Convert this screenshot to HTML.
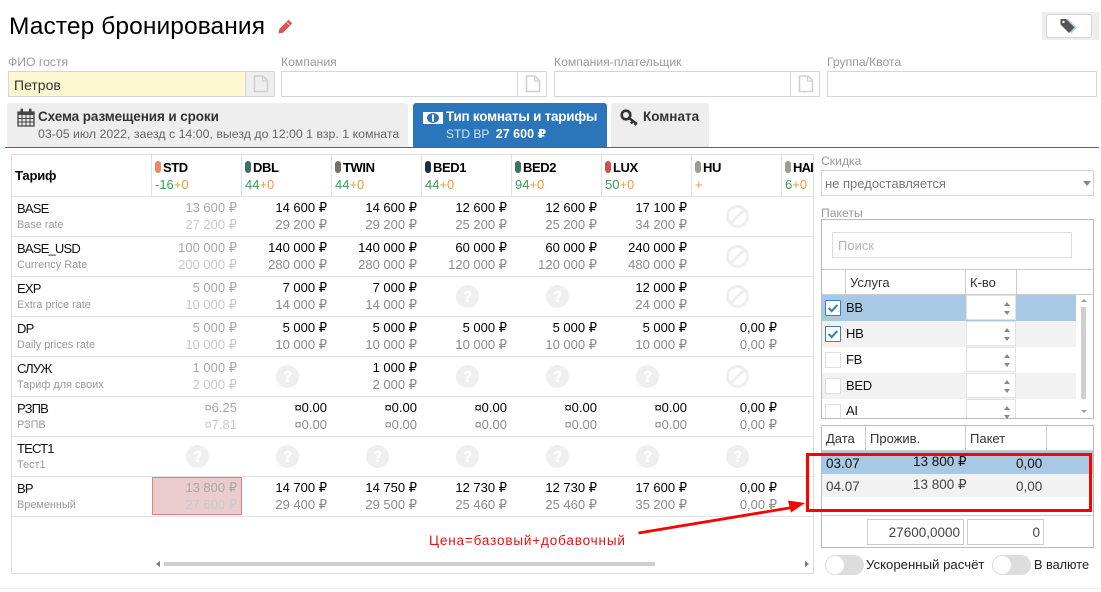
<!DOCTYPE html>
<html lang="ru"><head><meta charset="utf-8"><title>Мастер бронирования</title>
<style>
*{box-sizing:border-box}
html,body{margin:0;padding:0;background:#fff}
body{position:relative;width:1101px;height:592px;overflow:hidden;font-family:"Liberation Sans","DejaVu Sans",sans-serif;font-size:13px;color:#222}
.a{position:absolute}
.t{position:absolute;white-space:nowrap}
.lbl{color:#999;font-size:12.2px;line-height:14px}
.in{position:absolute;top:71px;height:26px;border:1px solid #d5d5d5;background:#fff}
.ad{position:absolute;top:71px;height:26px;width:30px;border:1px solid #d5d5d5;background:#fff}
.ad svg{position:absolute;left:7px;top:3px}
.vl{position:absolute;width:1px;background:#e2e2e2}
.hl{position:absolute;height:1px;background:#e2e2e2}
.pill{position:absolute;top:161px;width:6px;height:12px;border-radius:3px}
.hn{position:absolute;top:160px;font-weight:bold;font-size:13px;letter-spacing:-.4px;line-height:15px;color:#000;white-space:nowrap}
.hs{position:absolute;top:177px;font-size:13px;line-height:15px;color:#f09a3e;white-space:nowrap}
.hs u{text-decoration:none;color:#3e9a5c}
.n{position:absolute;left:17px;font-size:13px;letter-spacing:-.8px;line-height:16px;color:#111;white-space:nowrap}
.s{position:absolute;left:17px;font-size:10.9px;line-height:13px;color:#999;white-space:nowrap}
.c{position:absolute;width:86px;text-align:right;font-size:13px;line-height:17px;white-space:nowrap}
.c b,.c i{display:block;font-weight:normal;font-style:normal}
.c b{color:#000}.c i{color:#8c8c8c}
.c.d b{color:#a8a8a8}.c.d i{color:#cacaca}
.x1{left:151px}.x2{left:241px}.x3{left:331px}.x4{left:421px}.x5{left:511px}.x6{left:601px}.x7{left:691px}
.ic{position:absolute;width:23px;height:23px}
.chk{position:absolute;left:825px;width:16px;height:16px;border:1px solid #ddd;background:#fff;border-radius:1px}
.chk.on{border-color:#3a7fbf}
.sp{position:absolute;left:966px;width:50px;height:25px;background:#fff;border:1px solid #e2e2e2}
.sp:before,.sp:after{content:"";position:absolute;left:37px;border-left:3.5px solid transparent;border-right:3.5px solid transparent}
.sp:before{top:6px;border-bottom:4px solid #888}
.sp:after{top:15px;border-top:4px solid #888}
.p{position:absolute;font-size:13px;line-height:16px;color:#111;white-space:nowrap}
.m{font-size:13px;letter-spacing:-.3px}
.tg{position:absolute;top:555px;width:39px;height:20px;border-radius:10px;background:#ddd}
.tg:before{content:"";position:absolute;left:1px;top:1px;width:18px;height:18px;border-radius:9px;background:#fff}
</style></head><body>

<svg width="0" height="0" style="position:absolute"><defs>
<symbol id="q" viewBox="0 0 23 23"><circle cx="11.5" cy="11.5" r="11.5" fill="#efefef"/><path d="M7.8 8.8C8.2 6.6 9.800 5.500 11.700 5.500C13.900 5.500 15.500 6.900 15.500 8.800C15.500 11.300 12.800 11.500 12.800 13.500H10.200C10.200 10.500 12.700 10.300 12.700 8.900C12.700 8.200 12.200 7.800 11.600 7.800C10.900 7.800 10.400 8.300 10.300 9.200Z" fill="#fff"/><rect x="10.200" y="14.600" width="2.700" height="2.700" fill="#fff"/></symbol>
<symbol id="b" viewBox="0 0 23 23"><circle cx="11.5" cy="11.5" r="10" fill="none" stroke="#efefef" stroke-width="3"/><path d="M18.500 4.500L4.500 18.500" stroke="#efefef" stroke-width="3"/></symbol>
<symbol id="f" viewBox="0 0 16 18"><path d="M1.500 1H10L14.500 5.500V16.500H1.500Z" fill="none" stroke="#d0d0d0" stroke-width="1.600"/><path d="M9.500 1V6H14.500" fill="none" stroke="#d0d0d0" stroke-width="1.200"/></symbol>
<symbol id="k" viewBox="0 0 16 16"><path d="M3 8L6.500 11.500L13 4.500" fill="none" stroke="#3a7fbf" stroke-width="2.400"/></symbol>
</defs></svg>

<div class="t" style="left:9px;top:12px;font-size:24.5px;line-height:30px;color:#000;letter-spacing:.1px">Мастер бронирования</div>
<svg class="a" style="left:278px;top:19px" width="15" height="15" viewBox="0 0 15 15"><path d="M10.500.8L14.200 4.500L5 13.700L.6 14.400L1.300 10Z" fill="#d9534f"/><path d="M9 3.500L11.500 6" stroke="#fff" stroke-width=".8"/></svg>

<div class="a" style="left:1042px;top:12px;width:57px;height:28px;background:#eee"></div>
<div class="a" style="left:1046px;top:14px;width:46px;height:24px;background:#fff;border:1px solid #d5d5d5;border-radius:3px"></div>
<svg class="a" style="left:1060px;top:18px" width="18" height="16" viewBox="0 0 18 16"><path d="M3 1H8L17 9.500L11.500 15.500L3 7Z" fill="#b9cfe4"/><path d="M.5 1H6L14.500 9.500L9 15L.5 6.500Z" fill="#555"/><circle cx="3.500" cy="4" r="1.200" fill="#fff"/></svg>

<div class="t lbl" style="left:8px;top:55px">ФИО гостя</div>
<div class="t lbl" style="left:281px;top:55px">Компания</div>
<div class="t lbl" style="left:554px;top:55px">Компания-плательщик</div>
<div class="t lbl" style="left:827px;top:55px">Группа/Квота</div>

<div class="in" style="left:8px;width:238px;background:#fdf8cf;font-size:14px;line-height:27px;padding-left:5px;color:#333">Петров</div>
<div class="ad" style="left:245px;background:#eee"><svg width="16" height="18"><use href="#f"/></svg></div>
<div class="in" style="left:281px;width:237px"></div>
<div class="ad" style="left:517px"><svg width="16" height="18"><use href="#f"/></svg></div>
<div class="in" style="left:554px;width:237px"></div>
<div class="ad" style="left:790px"><svg width="16" height="18"><use href="#f"/></svg></div>
<div class="in" style="left:827px;width:270px"></div>

<div class="a" style="left:7px;top:103px;width:401px;height:44px;background:#eee;border-radius:3px 3px 0 0"></div>
<svg class="a" style="left:17px;top:108px" width="18" height="19" viewBox="0 0 18 19"><path d="M1 4H17V18H1Z" fill="#e6e6e6" stroke="#444" stroke-width="1.300"/><path d="M1 3.500H17V7H1Z" fill="#444"/><path d="M1 10.500H17M1 14H17M5 7V18M9 7V18M13 7V18" stroke="#444"/><rect x="3.500" y=".5" width="2.500" height="5" rx="1" fill="#444"/><rect x="12" y=".5" width="2.500" height="5" rx="1" fill="#444"/></svg>
<div class="t" style="left:38px;top:109px;font-size:13.5px;letter-spacing:-.1px;font-weight:bold;line-height:16px;color:#333">Схема размещения и сроки</div>
<div class="t" style="left:38px;top:127px;font-size:12.35px;line-height:15px;color:#666">03-05 июл 2022, заезд с 14:00, выезд до 12:00 1 взр. 1 комната</div>

<div class="a" style="left:413px;top:103px;width:194px;height:44px;background:#2b76ba;border-radius:3px 3px 0 0"></div>
<svg class="a" style="left:423px;top:111px" width="20" height="14" viewBox="0 0 20 14"><rect x="0" y="1" width="20" height="12" fill="#fff"/><ellipse cx="10" cy="7" rx="6" ry="5" fill="#2b76ba"/><rect x="9" y="3.500" width="2" height="7" fill="#fff"/></svg>
<div class="t" style="left:446px;top:109px;font-size:13.5px;letter-spacing:-.25px;font-weight:bold;line-height:16px;color:#fff">Тип комнаты и тарифы</div>
<div class="t" style="left:446px;top:127px;font-size:12px;line-height:15px;color:#d6e6f5">STD BP &nbsp;<span style="font-weight:bold;color:#fff;font-size:12.5px">27 600 ₽</span></div>

<div class="a" style="left:611px;top:103px;width:98px;height:44px;background:#eee;border-radius:3px 3px 0 0"></div>
<svg class="a" style="left:620px;top:109px" width="19" height="17" viewBox="0 0 19 17"><circle cx="6" cy="6" r="4.300" fill="none" stroke="#333" stroke-width="2.600"/><path d="M9 9L17 15M13 12L11 14.500M16 14.500L14.500 16" stroke="#333" stroke-width="2.400"/></svg>
<div class="t" style="left:643px;top:109px;font-size:13.5px;font-weight:bold;line-height:16px;color:#333">Комната</div>

<div class="a" style="left:5px;top:147px;width:1094px;height:1px;background:#2f6ea5"></div>

<!-- tariff table -->
<div class="a" style="left:11px;top:154px;width:803px;height:420px;border:1px solid #ddd;overflow:hidden"></div>
<div class="hl" style="left:12px;top:196px;width:801px"></div>
<div class="hl" style="left:12px;top:236px;width:801px"></div>
<div class="hl" style="left:12px;top:276px;width:801px"></div>
<div class="hl" style="left:12px;top:316px;width:801px"></div>
<div class="hl" style="left:12px;top:356px;width:801px"></div>
<div class="hl" style="left:12px;top:396px;width:801px"></div>
<div class="hl" style="left:12px;top:436px;width:801px"></div>
<div class="hl" style="left:12px;top:476px;width:801px"></div>
<div class="hl" style="left:12px;top:516px;width:801px"></div>
<div class="vl" style="left:151px;top:155px;height:41px"></div>
<div class="vl" style="left:241px;top:155px;height:41px"></div>
<div class="vl" style="left:331px;top:155px;height:41px"></div>
<div class="vl" style="left:421px;top:155px;height:41px"></div>
<div class="vl" style="left:511px;top:155px;height:41px"></div>
<div class="vl" style="left:601px;top:155px;height:41px"></div>
<div class="vl" style="left:691px;top:155px;height:41px"></div>
<div class="vl" style="left:781px;top:155px;height:41px"></div>

<div class="t" style="left:15px;top:168px;font-size:13px;font-weight:bold;line-height:16px;color:#000;letter-spacing:-.2px">Тариф</div>
<div class="pill" style="left:155px;background:#e8895f"></div><div class="hn" style="left:163px">STD</div><div class="hs" style="left:155px"><u>-16</u>+0</div>
<div class="pill" style="left:245px;background:#3f6f63"></div><div class="hn" style="left:253px">DBL</div><div class="hs" style="left:245px"><u>44</u>+0</div>
<div class="pill" style="left:335px;background:#75706a"></div><div class="hn" style="left:343px">TWIN</div><div class="hs" style="left:335px"><u>44</u>+0</div>
<div class="pill" style="left:425px;background:#1f2d4d"></div><div class="hn" style="left:433px">BED1</div><div class="hs" style="left:425px"><u>44</u>+0</div>
<div class="pill" style="left:515px;background:#3f6f63"></div><div class="hn" style="left:523px">BED2</div><div class="hs" style="left:515px"><u>94</u>+0</div>
<div class="pill" style="left:605px;background:#cf5252"></div><div class="hn" style="left:613px">LUX</div><div class="hs" style="left:605px"><u>50</u>+0</div>
<div class="pill" style="left:695px;background:#a09a90"></div><div class="hn" style="left:703px">HU</div><div class="hs" style="left:695px">+</div>
<div class="a" style="left:782px;top:155px;width:31px;height:41px;overflow:hidden">
<div class="pill" style="left:3px;top:6px;background:#a09a90"></div><div class="hn" style="left:11px;top:5px;letter-spacing:-.8px">HAL</div><div class="hs" style="left:3px;top:22px"><u>6</u>+0</div></div>

<div class="a" style="left:152px;top:477px;width:90px;height:38px;background:#ebcccc;border:1px solid #dc8080"></div>

<!-- BASE -->
<div class="n" style="top:201px">BASE</div><div class="s" style="top:219px">Base rate</div>
<div class="c d x1" style="top:199px"><b>13 600 ₽</b><i>27 200 ₽</i></div>
<div class="c x2" style="top:199px"><b>14 600 ₽</b><i>29 200 ₽</i></div>
<div class="c x3" style="top:199px"><b>14 600 ₽</b><i>29 200 ₽</i></div>
<div class="c x4" style="top:199px"><b>12 600 ₽</b><i>25 200 ₽</i></div>
<div class="c x5" style="top:199px"><b>12 600 ₽</b><i>25 200 ₽</i></div>
<div class="c x6" style="top:199px"><b>17 100 ₽</b><i>34 200 ₽</i></div>
<svg class="ic" style="left:726px;top:205px"><use href="#b"/></svg>
<!-- BASE_USD -->
<div class="n" style="top:241px">BASE_USD</div><div class="s" style="top:259px">Currency Rate</div>
<div class="c d x1" style="top:239px"><b>100 000 ₽</b><i>200 000 ₽</i></div>
<div class="c x2" style="top:239px"><b>140 000 ₽</b><i>280 000 ₽</i></div>
<div class="c x3" style="top:239px"><b>140 000 ₽</b><i>280 000 ₽</i></div>
<div class="c x4" style="top:239px"><b>60 000 ₽</b><i>120 000 ₽</i></div>
<div class="c x5" style="top:239px"><b>60 000 ₽</b><i>120 000 ₽</i></div>
<div class="c x6" style="top:239px"><b>240 000 ₽</b><i>480 000 ₽</i></div>
<svg class="ic" style="left:726px;top:245px"><use href="#b"/></svg>
<!-- EXP -->
<div class="n" style="top:281px">EXP</div><div class="s" style="top:299px">Extra price rate</div>
<div class="c d x1" style="top:279px"><b>5 000 ₽</b><i>10 000 ₽</i></div>
<div class="c x2" style="top:279px"><b>7 000 ₽</b><i>14 000 ₽</i></div>
<div class="c x3" style="top:279px"><b>7 000 ₽</b><i>14 000 ₽</i></div>
<svg class="ic" style="left:456px;top:285px"><use href="#q"/></svg>
<svg class="ic" style="left:546px;top:285px"><use href="#q"/></svg>
<div class="c x6" style="top:279px"><b>12 000 ₽</b><i>24 000 ₽</i></div>
<svg class="ic" style="left:726px;top:285px"><use href="#b"/></svg>
<!-- DP -->
<div class="n" style="top:321px">DP</div><div class="s" style="top:339px">Daily prices rate</div>
<div class="c d x1" style="top:319px"><b>5 000 ₽</b><i>10 000 ₽</i></div>
<div class="c x2" style="top:319px"><b>5 000 ₽</b><i>10 000 ₽</i></div>
<div class="c x3" style="top:319px"><b>5 000 ₽</b><i>10 000 ₽</i></div>
<div class="c x4" style="top:319px"><b>5 000 ₽</b><i>10 000 ₽</i></div>
<div class="c x5" style="top:319px"><b>5 000 ₽</b><i>10 000 ₽</i></div>
<div class="c x6" style="top:319px"><b>5 000 ₽</b><i>10 000 ₽</i></div>
<div class="c x7" style="top:319px"><b>0,00 ₽</b><i>0,00 ₽</i></div>
<!-- СЛУЖ -->
<div class="n" style="top:361px">СЛУЖ</div><div class="s" style="top:379px">Тариф для своих</div>
<div class="c d x1" style="top:359px"><b>1 000 ₽</b><i>2 000 ₽</i></div>
<svg class="ic" style="left:276px;top:365px"><use href="#q"/></svg>
<div class="c x3" style="top:359px"><b>1 000 ₽</b><i>2 000 ₽</i></div>
<svg class="ic" style="left:456px;top:365px"><use href="#q"/></svg>
<svg class="ic" style="left:546px;top:365px"><use href="#q"/></svg>
<svg class="ic" style="left:636px;top:365px"><use href="#q"/></svg>
<svg class="ic" style="left:726px;top:365px"><use href="#b"/></svg>
<!-- РЗПВ -->
<div class="n" style="top:401px">РЗПВ</div><div class="s" style="top:419px">РЗПВ</div>
<div class="c d x1" style="top:399px"><b>¤6.25</b><i>¤7.81</i></div>
<div class="c x2" style="top:399px"><b>¤0.00</b><i>¤0.00</i></div>
<div class="c x3" style="top:399px"><b>¤0.00</b><i>¤0.00</i></div>
<div class="c x4" style="top:399px"><b>¤0.00</b><i>¤0.00</i></div>
<div class="c x5" style="top:399px"><b>¤0.00</b><i>¤0.00</i></div>
<div class="c x6" style="top:399px"><b>¤0.00</b><i>¤0.00</i></div>
<div class="c x7" style="top:399px"><b>0,00 ₽</b><i>0,00 ₽</i></div>
<!-- ТЕСТ1 -->
<div class="n" style="top:441px">ТЕСТ1</div><div class="s" style="top:459px">Тест1</div>
<svg class="ic" style="left:186px;top:445px"><use href="#q"/></svg>
<svg class="ic" style="left:276px;top:445px"><use href="#q"/></svg>
<svg class="ic" style="left:366px;top:445px"><use href="#q"/></svg>
<svg class="ic" style="left:456px;top:445px"><use href="#q"/></svg>
<svg class="ic" style="left:546px;top:445px"><use href="#q"/></svg>
<svg class="ic" style="left:636px;top:445px"><use href="#q"/></svg>
<svg class="ic" style="left:726px;top:445px"><use href="#q"/></svg>
<!-- ВР -->
<div class="n" style="top:481px">ВР</div><div class="s" style="top:499px">Временный</div>
<div class="c d x1" style="top:479px"><b>13 800 ₽</b><i>27 600 ₽</i></div>
<div class="c x2" style="top:479px"><b>14 700 ₽</b><i>29 400 ₽</i></div>
<div class="c x3" style="top:479px"><b>14 750 ₽</b><i>29 500 ₽</i></div>
<div class="c x4" style="top:479px"><b>12 730 ₽</b><i>25 460 ₽</i></div>
<div class="c x5" style="top:479px"><b>12 730 ₽</b><i>25 460 ₽</i></div>
<div class="c x6" style="top:479px"><b>17 600 ₽</b><i>35 200 ₽</i></div>
<div class="c x7" style="top:479px"><b>0,00 ₽</b><i>0,00 ₽</i></div>

<!-- h scrollbar -->
<div class="a" style="left:164px;top:562px;width:491px;height:4px;background:#d0cfd0"></div>
<div class="a" style="left:156px;top:561px;border-top:3px solid transparent;border-bottom:3px solid transparent;border-right:4px solid #777"></div>
<div class="a" style="left:805px;top:561px;border-top:3px solid transparent;border-bottom:3px solid transparent;border-left:4px solid #777"></div>

<!-- right: discount -->
<div class="t lbl" style="left:821px;top:154px">Скидка</div>
<div class="a" style="left:821px;top:170px;width:273px;height:26px;border:1px solid #d5d5d5;background:#fff;font-size:13px;line-height:25px;padding-left:3px;color:#777">не предоставляется</div>
<div class="a" style="left:1083px;top:181px;border-left:4px solid transparent;border-right:4px solid transparent;border-top:5px solid #888"></div>

<div class="t lbl" style="left:821px;top:206px">Пакеты</div>
<div class="a" style="left:821px;top:219px;width:273px;height:200px;border:1px solid #bbb;background:#fff"></div>
<div class="a" style="left:832px;top:232px;width:240px;height:26px;border:1px solid #ddd;font-size:13px;line-height:25px;padding-left:5px;color:#b5b5b5">Поиск</div>
<div class="hl" style="left:822px;top:269px;width:271px;background:#ccc"></div>
<div class="hl" style="left:822px;top:294px;width:271px;background:#ccc"></div>
<div class="vl" style="left:845px;top:270px;height:24px;background:#ccc"></div>
<div class="vl" style="left:965px;top:270px;height:24px;background:#ccc"></div>
<div class="vl" style="left:1016px;top:270px;height:24px;background:#ccc"></div>
<div class="p" style="left:850px;top:275px;color:#333">Услуга</div>
<div class="p" style="left:970px;top:275px;color:#333">К-во</div>

<div class="a" style="left:822px;top:295px;width:254px;height:26px;background:#a8c8e4"></div>
<div class="a" style="left:822px;top:321px;width:254px;height:26px;background:#f2f2f2"></div>
<div class="a" style="left:822px;top:373px;width:254px;height:26px;background:#f2f2f2"></div>

<div class="chk on" style="top:300px"><svg style="position:absolute;left:0;top:0" width="14" height="14" viewBox="0 0 16 16"><use href="#k"/></svg></div>
<div class="chk on" style="top:326px"><svg style="position:absolute;left:0;top:0" width="14" height="14" viewBox="0 0 16 16"><use href="#k"/></svg></div>
<div class="chk" style="top:352px"></div>
<div class="chk" style="top:378px"></div>
<div class="chk" style="top:404px;height:14px;border-bottom:0"></div>
<div class="p m" style="left:846px;top:300px">BB</div>
<div class="p m" style="left:846px;top:326px">HB</div>
<div class="p m" style="left:846px;top:352px">FB</div>
<div class="p m" style="left:846px;top:378px">BED</div>
<div class="p m" style="left:846px;top:403px">AI</div>
<div class="sp" style="top:295px"></div>
<div class="sp" style="top:321px"></div>
<div class="sp" style="top:347px"></div>
<div class="sp" style="top:373px"></div>
<div class="sp" style="top:399px;height:19px;border-bottom:0"></div>
<div class="a" style="left:1081px;top:307px;width:5px;height:92px;background:#d0cfd0"></div>
<div class="a" style="left:1081px;top:299px;border-left:3px solid transparent;border-right:3px solid transparent;border-bottom:3px solid #999"></div>
<div class="a" style="left:1081px;top:410px;border-left:3px solid transparent;border-right:3px solid transparent;border-top:3px solid #999"></div>

<!-- dates -->
<div class="a" style="left:821px;top:425px;width:273px;height:123px;border:1px solid #bbb;background:#fff"></div>
<div class="hl" style="left:822px;top:450px;width:271px;background:#ccc"></div>
<div class="vl" style="left:865px;top:426px;height:24px;background:#ccc"></div>
<div class="vl" style="left:965px;top:426px;height:24px;background:#ccc"></div>
<div class="vl" style="left:1046px;top:426px;height:24px;background:#ccc"></div>
<div class="p" style="left:826px;top:431px;color:#333">Дата</div>
<div class="p" style="left:870px;top:431px;color:#333">Прожив.</div>
<div class="p" style="left:970px;top:431px;color:#333">Пакет</div>
<div class="a" style="left:822px;top:451px;width:271px;height:23px;background:#a8c8e4"></div>
<div class="a" style="left:822px;top:474px;width:271px;height:23px;background:#f2f2f2"></div>
<div class="p" style="left:826px;top:456px;font-size:13.5px">03.07</div>
<div class="p" style="left:913px;top:454px;font-size:13.5px">13 800 ₽</div>
<div class="p" style="left:1016px;top:456px;font-size:13.5px">0,00</div>
<div class="p" style="left:826px;top:479px;font-size:13.5px;color:#444">04.07</div>
<div class="p" style="left:913px;top:477px;font-size:13.5px;color:#444">13 800 ₽</div>
<div class="p" style="left:1016px;top:479px;font-size:13.5px;color:#444">0,00</div>
<div class="hl" style="left:822px;top:515px;width:271px;background:#ccc"></div>
<div class="a" style="left:867px;top:519px;width:97px;height:26px;border:1px solid #ccc;font-size:13.5px;line-height:25px;text-align:right;padding-right:3px;color:#444">27600,0000</div>
<div class="a" style="left:967px;top:519px;width:77px;height:26px;border:1px solid #ccc;font-size:13.5px;line-height:25px;text-align:right;padding-right:3px;color:#444">0</div>

<div class="tg" style="left:825px"></div>
<div class="t" style="left:866px;top:557px;font-size:13.2px;line-height:16px;color:#222">Ускоренный расчёт</div>
<div class="tg" style="left:992px"></div>
<div class="t" style="left:1034px;top:557px;font-size:12.7px;line-height:16px;color:#222">В валюте</div>

<div class="a" style="left:0;top:588px;width:1101px;height:1px;background:#eee"></div>

<!-- annotations -->
<div class="a" style="left:806px;top:453px;width:286px;height:59px;border:3px solid #f00"></div>
<svg class="a" style="left:630px;top:495px" width="180" height="45" viewBox="0 0 180 45"><path d="M8.500 38L162 12.500" stroke="#f00" stroke-width="2.800" fill="none"/><path d="M175 8L158 5.500L161 17.500Z" fill="#f00"/></svg>
<div class="t" style="left:429px;top:533px;font-size:13.5px;line-height:16px;color:#e81010;letter-spacing:.85px">Цена=базовый+добавочный</div>
</body></html>
